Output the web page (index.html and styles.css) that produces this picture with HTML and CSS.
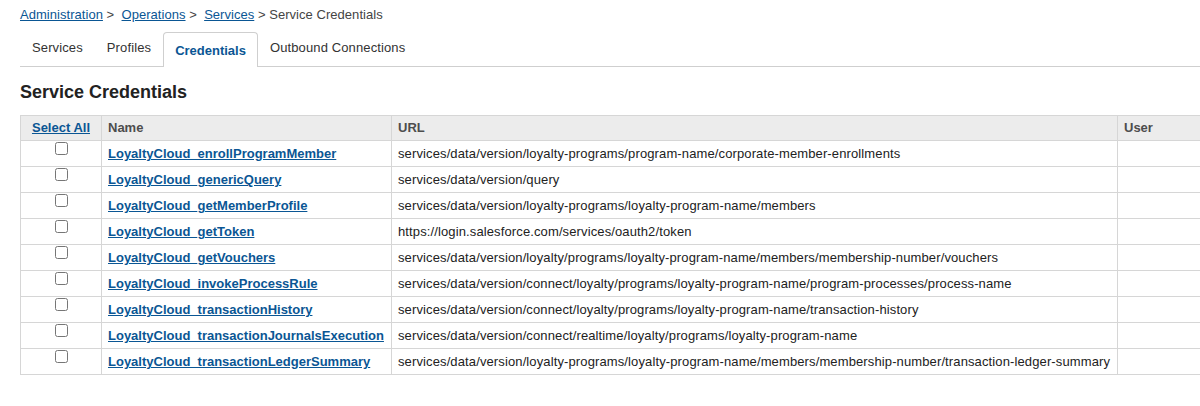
FILE: index.html
```html
<!DOCTYPE html>
<html>
<head>
<meta charset="utf-8">
<link rel="stylesheet" href="styles.css">
</head>
<body>
<div class="page">
  <div class="crumbs"><a href="#">Administration</a> &gt;&nbsp; <a href="#">Operations</a> &gt;&nbsp; <a href="#">Services</a> &gt; Service Credentials</div>
  <div class="tabs">
    <div class="tab">Services</div>
    <div class="tab">Profiles</div>
    <div class="tab active">Credentials</div>
    <div class="tab">Outbound Connections</div>
  </div>
  <h1 class="title">Service Credentials</h1>
  <table class="grid">
    <colgroup>
      <col class="c-sel"><col class="c-name"><col class="c-url"><col class="c-user">
    </colgroup>
    <thead>
      <tr><th class="sel"><a href="#">Select All</a></th><th>Name</th><th>URL</th><th>User</th></tr>
    </thead>
    <tbody>
      <tr><td class="sel"><input type="checkbox"></td><td><a href="#">LoyaltyCloud_enrollProgramMember</a></td><td>services/data/version/loyalty-programs/program-name/corporate-member-enrollments</td><td></td></tr>
      <tr><td class="sel"><input type="checkbox"></td><td><a href="#">LoyaltyCloud_genericQuery</a></td><td>services/data/version/query</td><td></td></tr>
      <tr><td class="sel"><input type="checkbox"></td><td><a href="#">LoyaltyCloud_getMemberProfile</a></td><td>services/data/version/loyalty-programs/loyalty-program-name/members</td><td></td></tr>
      <tr><td class="sel"><input type="checkbox"></td><td><a href="#">LoyaltyCloud_getToken</a></td><td>https://login.salesforce.com/services/oauth2/token</td><td></td></tr>
      <tr><td class="sel"><input type="checkbox"></td><td><a href="#">LoyaltyCloud_getVouchers</a></td><td>services/data/version/loyalty/programs/loyalty-program-name/members/membership-number/vouchers</td><td></td></tr>
      <tr><td class="sel"><input type="checkbox"></td><td><a href="#">LoyaltyCloud_invokeProcessRule</a></td><td>services/data/version/connect/loyalty/programs/loyalty-program-name/program-processes/process-name</td><td></td></tr>
      <tr><td class="sel"><input type="checkbox"></td><td><a href="#">LoyaltyCloud_transactionHistory</a></td><td>services/data/version/connect/loyalty/programs/loyalty-program-name/transaction-history</td><td></td></tr>
      <tr><td class="sel"><input type="checkbox"></td><td><a href="#">LoyaltyCloud_transactionJournalsExecution</a></td><td>services/data/version/connect/realtime/loyalty/programs/loyalty-program-name</td><td></td></tr>
      <tr><td class="sel"><input type="checkbox"></td><td><a href="#">LoyaltyCloud_transactionLedgerSummary</a></td><td>services/data/version/loyalty-programs/loyalty-program-name/members/membership-number/transaction-ledger-summary</td><td></td></tr>
    </tbody>
  </table>
</div>
</body>
</html>
```
FILE: styles.css
```css
html, body {
  margin: 0;
  padding: 0;
  overflow: hidden;
  background: #fff;
}
body {
  font-family: "Liberation Sans", Arial, Helvetica, sans-serif;
  font-size: 13px;
  color: #333;
  letter-spacing: 0.12px;
}
.page {
  padding: 7px 0 0 20px;
}
a {
  color: #0a5694;
  text-decoration: underline;
}
.crumbs {
  line-height: 16px;
  color: #444;
  letter-spacing: 0.04px;
}
.tabs {
  display: flex;
  margin-top: 9px;
  border-bottom: 1px solid #cfcfcf;
  height: 35px;
  box-sizing: border-box;
}
.tab {
  padding: 8px 12px 0;
  line-height: 16px;
  color: #333;
}
.tab.active {
  border: 1px solid #cfcfcf;
  border-bottom: none;
  border-radius: 4px 4px 0 0;
  background: #fff;
  height: 35px;
  box-sizing: border-box;
  padding: 10px 11px 0;
  font-weight: bold;
  letter-spacing: 0;
  color: #0a5694;
}
.title {
  margin: 15px 0 0;
  font-size: 18px;
  line-height: 20px;
  font-weight: bold;
  letter-spacing: 0;
  color: #222;
}
.grid {
  margin-top: 13px;
  border-collapse: collapse;
  table-layout: fixed;
  width: 1247px;
}
.c-sel { width: 81px; }
.c-name { width: 290px; }
.c-url { width: 726px; }
.c-user { width: 150px; }
.grid th, .grid td {
  border: 1px solid #d6d6d6;
  text-align: left;
  white-space: nowrap;
  overflow: hidden;
  line-height: 17px;
  padding: 4px 6px;
}
.grid th {
  background: #ececec;
  color: #4d4d4d;
  font-weight: bold;
  letter-spacing: 0;
  padding: 3px 6px 4px;
}
.grid th.sel {
  text-align: center;
}
.grid td a {
  font-weight: bold;
  letter-spacing: 0;
}
.grid td {
  color: #222;
}
.grid td.sel {
  text-align: center;
  vertical-align: top;
  padding: 0;
}
.grid td.sel input {
  margin: 1px 0 0 0;
  width: 13px;
  height: 13px;
}
```
